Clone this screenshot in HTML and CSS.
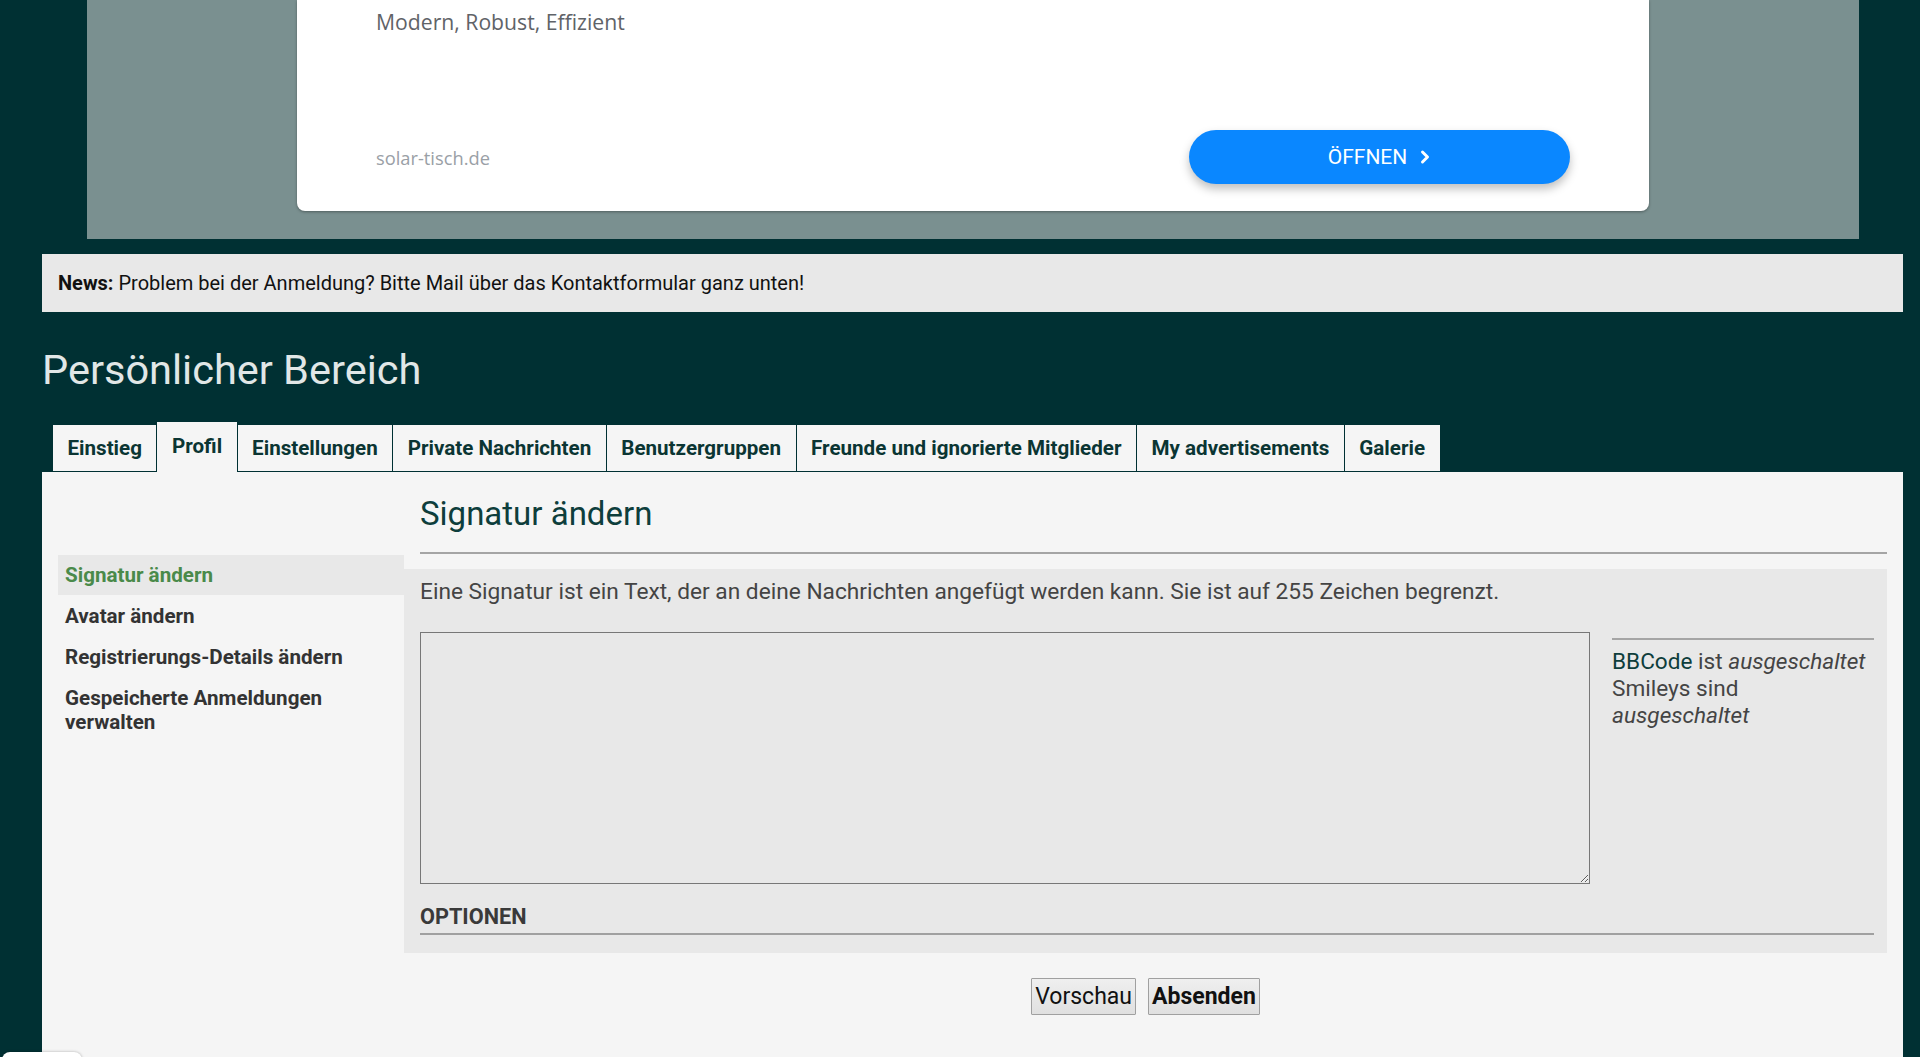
FILE: index.html
```html
<!DOCTYPE html>
<html lang="de">
<head>
<meta charset="utf-8">
<title>Persönlicher Bereich</title>
<link rel="stylesheet" href="styles.css">
</head>
<body>
<div class="page">
  <div class="ad">
    <div class="ad-card">
      <div class="ad-desc">Modern, Robust, Effizient</div>
      <div class="ad-foot">
        <span class="ad-url">solar-tisch.de</span>
        <a class="ad-btn" href="#">ÖFFNEN
          <svg class="chev" width="12" height="16" viewBox="0 0 12 16"><path d="M3.5 3 L8.5 8 L3.5 13" fill="none" stroke="#fff" stroke-width="3" stroke-linecap="round" stroke-linejoin="round"/></svg>
        </a>
      </div>
    </div>
  </div>

  <div class="news"><strong>News:</strong> Problem bei der Anmeldung? Bitte Mail über das Kontaktformular ganz unten!</div>

  <h1 class="page-title">Persönlicher Bereich</h1>

  <ul class="tabs">
    <li class="tab">Einstieg</li>
    <li class="tab active">Profil</li>
    <li class="tab">Einstellungen</li>
    <li class="tab">Private Nachrichten</li>
    <li class="tab">Benutzergruppen</li>
    <li class="tab">Freunde und ignorierte Mitglieder</li>
    <li class="tab">My advertisements</li>
    <li class="tab">Galerie</li>
  </ul>

  <div class="panel">
    <ul class="sidemenu">
      <li class="menu-item active">Signatur ändern</li>
      <li class="menu-item">Avatar ändern</li>
      <li class="menu-item">Registrierungs-Details ändern</li>
      <li class="menu-item">Gespeicherte Anmeldungen verwalten</li>
    </ul>
    <div class="main">
      <h2 class="main-title">Signatur ändern</h2>
      <div class="rule"></div>
      <div class="box">
        <p class="desc">Eine Signatur ist ein Text, der an deine Nachrichten angefügt werden kann. Sie ist auf 255 Zeichen begrenzt.</p>
        <div class="editor">
          <textarea class="sig-input"></textarea>
          <div class="sideinfo">
            <div class="side-rule"></div>
            <div class="side-text"><span class="nowrap"><a class="bb" href="#">BBCode</a> ist <em>ausgeschaltet</em></span><br>Smileys sind <em>ausgeschaltet</em></div>
          </div>
        </div>
        <div class="options">OPTIONEN</div>
      </div>
      <div class="actions">
        <button class="btn" type="button">Vorschau</button>
        <button class="btn btn-primary" type="button">Absenden</button>
      </div>
    </div>
  </div>
</div>
<div class="corner-pop"></div>
</body>
</html>
```
FILE: styles.css
```css
html, body {
  margin: 0;
  padding: 0;
}
body {
  background: #003033;
  font-family: Roboto, "Liberation Sans", Arial, sans-serif;
  overflow: hidden;
}
.page {
  margin-left: 42px;
  width: 1861px;
}

/* Ad */
.ad {
  margin: 0 44px 0 45px;
  height: 239px;
  background: #7a9090;
  display: flex;
  justify-content: center;
}
.ad-card {
  width: 1352px;
  height: 211px;
  box-sizing: border-box;
  background: #fff;
  border-radius: 0 0 8px 8px;
  box-shadow: 0 1px 3px rgba(0, 0, 0, 0.35);
  padding: 8px 79px 27px;
  display: flex;
  flex-direction: column;
  justify-content: space-between;
}
.ad-desc {
  font-family: "Open Sans", Roboto, sans-serif;
  font-size: 21.2px;
  line-height: 28px;
  color: #5f6368;
}
.ad-foot {
  display: flex;
  justify-content: space-between;
  align-items: center;
}
.ad-url {
  font-family: "Open Sans", Roboto, sans-serif;
  font-size: 18.3px;
  color: #9aa0a6;
}
.ad-btn {
  width: 381px;
  height: 54px;
  border-radius: 27px;
  background: #0a87ff;
  color: #fff;
  text-decoration: none;
  display: flex;
  align-items: center;
  justify-content: center;
  gap: 12px;
  font-size: 21px;
  box-shadow: 0 5px 10px rgba(0, 0, 0, 0.25);
}
.chev {
  display: block;
}

/* News */
.news {
  margin-top: 15px;
  height: 58px;
  box-sizing: border-box;
  padding: 0 16px;
  background: #e8e8e8;
  display: flex;
  align-items: center;
  font-size: 20px;
  color: #111;
  white-space: pre;
}
.news strong {
  font-weight: 700;
}

/* Title */
.page-title {
  margin: 34px 0 0;
  font-size: 41.5px;
  line-height: 48px;
  font-weight: 400;
  color: #e1e7e7;
}

/* Tabs */
.tabs {
  display: flex;
  align-items: flex-end;
  list-style: none;
  margin: 28px 0 0;
  padding: 0 0 0 11px;
  height: 50px;
}
.tab {
  height: 46px;
  margin: 0 1px 1px 0;
  padding: 0 14.5px;
  box-sizing: border-box;
  background: #f5f5f5;
  display: flex;
  align-items: center;
  font-size: 20.6px;
  font-weight: 700;
  color: #0b3533;
}
.tab.active {
  height: 50px;
  margin-bottom: 0;
  align-items: flex-start;
  padding-top: 12px;
  line-height: 24px;
}

/* Panel */
.panel {
  background: #f5f5f5;
  display: flex;
  align-items: flex-start;
  min-height: 700px;
}
.sidemenu {
  list-style: none;
  margin: 0 0 0 16px;
  padding: 83px 0 0;
  width: 346px;
}
.menu-item {
  padding: 8px 8px 8px 7px;
  margin-bottom: 1px;
  line-height: 24px;
  font-size: 20.6px;
  font-weight: 700;
  color: #333;
}
.menu-item.active {
  background: #e8e8e8;
  color: #4a8a4a;
}
.main {
  flex: 1;
  margin-right: 16px;
}
.main-title {
  margin: 23px 0 0 16px;
  font-size: 33px;
  line-height: 38px;
  font-weight: 400;
  color: #0e3e3c;
}
.rule {
  margin: 19px 0 0 16px;
  height: 2px;
  background: #a5a5a5;
}
.box {
  margin-top: 15px;
  background: #e8e8e8;
  padding: 11px 13px 18px 16px;
}
.desc {
  margin: 0;
  font-size: 22.7px;
  line-height: 24px;
  color: #444;
}
.editor {
  display: flex;
  gap: 22px;
  margin-top: 28px;
}
.sig-input {
  width: 1170px;
  height: 252px;
  box-sizing: border-box;
  border: 1px solid #777;
  background: #e8e8e8;
  margin: 0;
  padding: 4px;
  font-family: Roboto, "Liberation Sans", sans-serif;
  font-size: 18px;
}
.sideinfo {
  flex: 1;
  padding-top: 6px;
}
.side-rule {
  height: 2px;
  background: #a5a5a5;
  margin-bottom: 8px;
}
.side-text {
  font-size: 22.6px;
  line-height: 27px;
  color: #444;
}
.nowrap {
  white-space: nowrap;
}
.bb {
  color: #0e3e3c;
  text-decoration: none;
}
.options {
  margin-top: 21px;
  padding-bottom: 4px;
  border-bottom: 2px solid #a0a0a0;
  font-size: 21.7px;
  line-height: 24px;
  font-weight: 700;
  color: #3a3a3a;
}
.actions {
  display: flex;
  justify-content: center;
  gap: 12px;
  margin-top: 25px;
}
.btn {
  height: 37px;
  padding: 0 3px;
  font-family: Roboto, "Liberation Sans", sans-serif;
  font-size: 23px;
  color: #111;
  background: linear-gradient(#efefef, #e0e0e0);
  border: 1px solid #a0a0a0;
  border-radius: 1px;
}
.btn-primary {
  font-weight: 700;
}

.corner-pop {
  position: fixed;
  left: 2px;
  bottom: -20px;
  width: 80px;
  height: 25px;
  background: #fff;
  border-radius: 8px;
  box-shadow: 0 0 3px rgba(0, 0, 0, 0.3);
}
```
